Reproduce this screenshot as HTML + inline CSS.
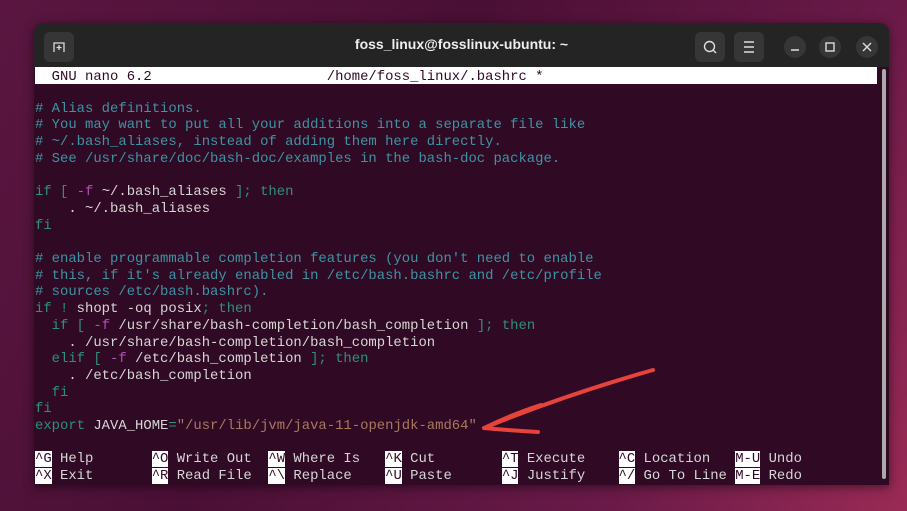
<!DOCTYPE html>
<html><head><style>
body{margin:0;width:907px;height:511px;overflow:hidden;background:linear-gradient(120deg,#5a1640 0%,#4a0f35 40%,#6a1a48 75%,#9a2a55 100%);font-family:"Liberation Sans",sans-serif;position:relative}
.win{position:absolute;left:34px;top:23px;width:855px;height:462px;background:#300a24;border-radius:10px 10px 0 0;overflow:hidden;box-shadow:0 2px 10px rgba(0,0,0,.5)}
.tb{height:44px;background:#242424;position:relative;color:#eee}
.title{position:absolute;left:0;right:0;top:13px;text-align:center;font-weight:bold;font-size:14px}
.btn{position:absolute;top:9px;width:30px;height:30px;border-radius:6px;background:#363636}
.cb{position:absolute;top:13px;width:22px;height:22px;border-radius:50%;background:#363636}
.term{position:absolute;left:1px;top:46px;font-family:"Liberation Mono",monospace;font-size:13.9px;line-height:16.7px;color:#d6d6d6;white-space:pre}
.hd{background:#fff;color:#300a24;width:842px;height:15px;margin-top:-2px;padding-top:2px;line-height:16.7px}
.c{color:#3e93a3}.k{color:#2f9078}.m{color:#b24db7}.s{color:#a87a5c}
.i{background:#fff;color:#300a24}
.sb{position:absolute;left:848px;top:46px;width:4px;height:410px;background:#aaa;border-radius:2px}
</style></head><body>
<div class="win">
<div class="tb">
<div class="btn" style="left:10px"><svg width="30" height="30"><path d="M10 20V11h10v9M15 13v5M12.5 15.5h5" stroke="#ddd" stroke-width="1.3" fill="none"/></svg></div>
<div class="title">foss_linux@fosslinux-ubuntu: ~</div>
<div class="btn" style="left:661px"><svg width="30" height="30"><circle cx="14.5" cy="14.5" r="5" stroke="#ddd" stroke-width="1.4" fill="none"/><path d="M18 18l3 3" stroke="#ddd" stroke-width="1.4"/></svg></div>
<div class="btn" style="left:700px"><svg width="30" height="30"><path d="M10 10h10M10 15h10M10 20h10" stroke="#ddd" stroke-width="1.4"/></svg></div>
<div class="cb" style="left:750px"><svg width="22" height="22"><path d="M7 14h8" stroke="#ddd" stroke-width="1.4"/></svg></div>
<div class="cb" style="left:785px"><svg width="22" height="22"><rect x="7" y="7" width="8" height="8" stroke="#ddd" stroke-width="1.4" fill="none"/></svg></div>
<div class="cb" style="left:822px"><svg width="22" height="22"><path d="M7 7l8 8M15 7l-8 8" stroke="#ddd" stroke-width="1.4"/></svg></div>
</div>
<div class="term"><div class="hd">  GNU nano 6.2                     /home/foss_linux/.bashrc *</div>
<span class="c"># Alias definitions.
# You may want to put all your additions into a separate file like
# ~/.bash_aliases, instead of adding them here directly.
# See /usr/share/doc/bash-doc/examples in the bash-doc package.</span>

<span class="k">if [</span> <span class="m">-f</span> ~/.bash_aliases <span class="k">]; then</span>
    . ~/.bash_aliases
<span class="k">fi</span>

<span class="c"># enable programmable completion features (you don't need to enable
# this, if it's already enabled in /etc/bash.bashrc and /etc/profile
# sources /etc/bash.bashrc).</span>
<span class="k">if !</span> shopt -oq posix<span class="k">; then</span>
  <span class="k">if [</span> <span class="m">-f</span> /usr/share/bash-completion/bash_completion <span class="k">]; then</span>
    . /usr/share/bash-completion/bash_completion
  <span class="k">elif [</span> <span class="m">-f</span> /etc/bash_completion <span class="k">]; then</span>
    . /etc/bash_completion
  <span class="k">fi</span>
<span class="k">fi</span>
<span class="k">export</span> JAVA_HOME<span class="k">=</span><span class="s">"/usr/lib/jvm/java-11-openjdk-amd64"</span>

<span class="i">^G</span> Help       <span class="i">^O</span> Write Out  <span class="i">^W</span> Where Is   <span class="i">^K</span> Cut        <span class="i">^T</span> Execute    <span class="i">^C</span> Location   <span class="i">M-U</span> Undo
<span class="i">^X</span> Exit       <span class="i">^R</span> Read File  <span class="i">^\</span> Replace    <span class="i">^U</span> Paste      <span class="i">^J</span> Justify    <span class="i">^/</span> Go To Line <span class="i">M-E</span> Redo</div>
<div class="sb"></div>
</div>
<svg style="position:absolute;left:0;top:0" width="907" height="511"><path d="M653 370 C600 385 540 405 484 428 M484 428 C505 430 520 431 538 432 M484 428 C505 418 525 410 541 405" stroke="#e8433b" stroke-width="4" fill="none" stroke-linecap="round"/></svg>
</body></html>
